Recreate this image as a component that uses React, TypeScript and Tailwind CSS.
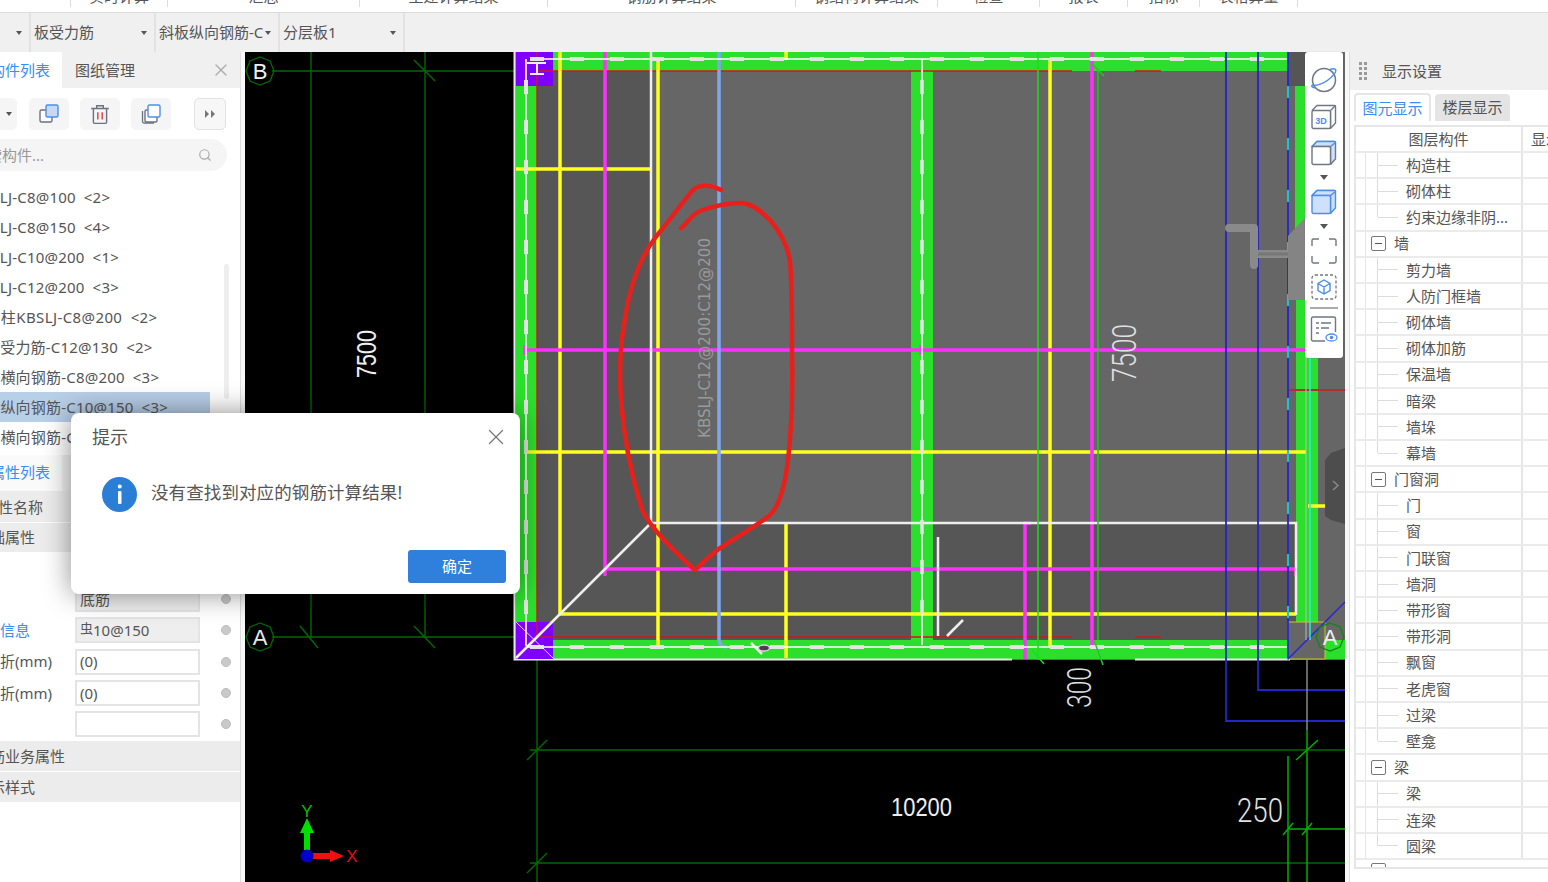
import React from 'react';
import { X, Search } from 'lucide-react';

const ribbon = [
  { label: '实时计算', w: 'w-[98px]' },
  { label: '汇总', w: 'w-[192px]' },
  { label: '土建计算结果', w: 'w-[188px]' },
  { label: '钢筋计算结果', w: 'w-[248px]' },
  { label: '钢结构计算结果', w: 'w-[142px]' },
  { label: '检查', w: 'w-[102px]' },
  { label: '报表', w: 'w-[88px]' },
  { label: '指标', w: 'w-[72px]' },
  { label: '表格算量', w: 'w-[98px]' },
];

const parts = [
  { text: 'KBSLJ-C8@100 <2>', cls: 'ml-[2px]' },
  { text: 'KBSLJ-C8@150 <4>', cls: 'ml-[2px]' },
  { text: 'KBSLJ-C10@200 <1>', cls: 'ml-[2px]' },
  { text: 'KBSLJ-C12@200 <3>', cls: 'ml-[2px]' },
  { text: '柱帽柱KBSLJ-C8@200 <2>', cls: 'tracking-[0.4px]' },
  { text: '板受力筋-C12@130 <2>', cls: 'ml-[15px]' },
  { text: '斜板横向钢筋-C8@200 <3>', cls: '' },
  { text: '斜板纵向钢筋-C10@150 <3>', cls: '' },
  { text: '斜板横向钢筋-C10@150 <3>', cls: '' },
];

const layers: { name: string; kind: 'child' | 'last' | 'group' }[] = [
  { name: '构造柱', kind: 'child' },
  { name: '砌体柱', kind: 'child' },
  { name: '约束边缘非阴...', kind: 'last' },
  { name: '墙', kind: 'group' },
  { name: '剪力墙', kind: 'child' },
  { name: '人防门框墙', kind: 'child' },
  { name: '砌体墙', kind: 'child' },
  { name: '砌体加筋', kind: 'child' },
  { name: '保温墙', kind: 'child' },
  { name: '暗梁', kind: 'child' },
  { name: '墙垛', kind: 'child' },
  { name: '幕墙', kind: 'last' },
  { name: '门窗洞', kind: 'group' },
  { name: '门', kind: 'child' },
  { name: '窗', kind: 'child' },
  { name: '门联窗', kind: 'child' },
  { name: '墙洞', kind: 'child' },
  { name: '带形窗', kind: 'child' },
  { name: '带形洞', kind: 'child' },
  { name: '飘窗', kind: 'child' },
  { name: '老虎窗', kind: 'child' },
  { name: '过梁', kind: 'child' },
  { name: '壁龛', kind: 'last' },
  { name: '梁', kind: 'group' },
  { name: '梁', kind: 'child' },
  { name: '连梁', kind: 'child' },
  { name: '圆梁', kind: 'last' },
];

const Caret = ({ className = '' }: { className?: string }) => (
  <span className={`w-0 h-0 border-l-[3.5px] border-r-[3.5px] border-t-[4px] border-l-transparent border-r-transparent border-t-[#555] ${className}`} />
);

const Dropdown = ({ label, w }: { label: string; w: string }) => (
  <div className={`${w} h-full flex items-center justify-between pl-[3px] pr-[7px] border-r-2 border-[#e2e2e2] overflow-hidden`}>
    <span className="whitespace-nowrap overflow-hidden">{label}</span>
    <Caret className="shrink-0 ml-[2px]" />
  </div>
);

const CopyIcon = ({ stack = false }: { stack?: boolean }) => (
  <svg width="22" height="22" viewBox="0 0 22 22" fill="none">
    {stack && <path d="M2.5 8v10.5a1.5 1.5 0 0 0 1.5 1.5h10" stroke="#6b7280" strokeWidth="1.3" />}
    <rect x={stack ? 5 : 2} y="7" width="12" height="12" rx="1.5" stroke="#6b7280" strokeWidth="1.4" fill="#fff" />
    <rect x="8" y="2" width="12" height="12" rx="1.5" stroke="#4c8fe8" strokeWidth="1.4" fill={stack ? '#fff' : '#c5d9f5'} />
  </svg>
);

const TrashIcon = () => (
  <svg width="22" height="22" viewBox="0 0 20 20" fill="none">
    <path d="M2 5h16M7 5V2.5h6V5M4 5v12.5A1 1 0 0 0 5 18.500h10a1 1 0 0 0 1-1V5" stroke="#6b7280" strokeWidth="1.3" />
    <path d="M8 8.500v6.500M12 8.500v6.500" stroke="#e5484d" strokeWidth="1.4" />
  </svg>
);

const Cube = ({ top = false, filled = false, label = false }: { top?: boolean; filled?: boolean; label?: boolean }) => {
  const blue = '#4c8fe8';
  const gray = '#6f7684';
  return (
    <svg width="26" height="26" viewBox="0 0 26 26" fill="none">
      <path d="M1 6.500L6 1.500h18.500V19.500L19.500 24.500" fill={filled ? '#c9defa' : top ? '#cfe0f8' : '#fff'} />
      <path d="M19.500 7V24.500" stroke={filled ? blue : gray} strokeWidth="1.4" />
      <path d="M1 6.500L6 1.500H23.500a1 1 0 0 1 1 1V19L19.500 24.500" stroke={filled ? blue : gray} strokeWidth="1.4" />
      {(top || filled) && <path d="M1 6.500L6 1.500H23.500a1 1 0 0 1 1 1L19.500 6.500H1z" stroke={blue} strokeWidth="1.4" fill="#cfe0f8" />}
      <rect x="1" y="6.500" width="18.500" height="18" rx="1.500" stroke={filled ? blue : gray} strokeWidth="1.4" fill={filled ? '#cfe0fa' : '#fff'} />
      {!top && !filled && <path d="M19.500 6.500L24.500 1.500" stroke={gray} strokeWidth="1.4" />}
      {label && <text x="10" y="20" textAnchor="middle" fontSize="9" fontWeight="700" fill={blue} fontFamily="Liberation Sans, sans-serif">3D</text>}
    </svg>
  );
};

const SideTools = () => (
  <div className="absolute right-[2px] top-0 w-[38px] h-[306px] bg-white rounded-b-[3px] rounded-t-[3px] flex flex-col items-center pt-[14px] shadow-[0_0_1px_rgba(0,0,0,0.3)]">
    <svg width="28" height="28" viewBox="0 0 28 28" fill="none">
      <circle cx="14" cy="14" r="11.500" stroke="#6f7684" strokeWidth="1.5" />
      <path d="M2 19C6 20 13 18 18 14C23 10 27 6 25.500 3.500C24 2 21 3 19 4" stroke="#4c8fe8" strokeWidth="1.5" />
      <path d="M2 19C1 21 3 22 6 21.500" stroke="#4c8fe8" strokeWidth="1.5" />
    </svg>
    <div className="mt-[10px]"><Cube label /></div>
    <div className="mt-[10px]"><Cube top /></div>
    <span className="mt-[9px] w-0 h-0 border-l-[4px] border-r-[4px] border-t-[5px] border-l-transparent border-r-transparent border-t-[#555]" />
    <div className="mt-[9px]"><Cube filled /></div>
    <span className="mt-[9px] w-0 h-0 border-l-[4px] border-r-[4px] border-t-[5px] border-l-transparent border-r-transparent border-t-[#555]" />
    <svg className="mt-[9px]" width="26" height="26" viewBox="0 0 26 26" fill="none" stroke="#6f7684" strokeWidth="1.4">
      <path d="M1 8V2.500A1.500 1.500 0 0 1 2.500 1H8M18 1h5.500A1.500 1.500 0 0 1 25 2.500V8M25 18v5.500a1.500 1.500 0 0 1-1.500 1.500H18M8 25H2.500A1.500 1.500 0 0 1 1 23.500V18" />
    </svg>
    <svg className="mt-[10px]" width="26" height="26" viewBox="0 0 26 26" fill="none">
      <rect x="1" y="1" width="24" height="24" rx="3" stroke="#6f7684" strokeWidth="1.3" strokeDasharray="3 2" />
      <path d="M13 6L19 9.500V16.500L13 20L7 16.500V9.500L13 6ZM7 9.500L13 13L19 9.500M13 13V20" stroke="#4c8fe8" strokeWidth="1.4" />
    </svg>
    <div className="mt-[7px] w-[28px] h-[2px] bg-[#aaa]" />
    <svg className="mt-[7px]" width="28" height="28" viewBox="0 0 28 28" fill="none">
      <path d="M15 25H3a1.500 1.500 0 0 1-1.500-1.500V2.500A1.500 1.500 0 0 1 3 1h21a1.500 1.500 0 0 1 1.500 1.500V16" stroke="#6f7684" strokeWidth="1.4" />
      <path d="M6 7h3M11 7h10M6 12h3M11 12h8M6 17h3" stroke="#6f7684" strokeWidth="1.4" />
      <ellipse cx="21.500" cy="21.500" rx="5.500" ry="3.500" stroke="#4c8fe8" strokeWidth="1.3" fill="#fff" />
      <circle cx="21.500" cy="21.500" r="1.800" fill="#4c8fe8" />
    </svg>
  </div>
);

const Drawing = () => (
  <svg className="block w-full h-full" viewBox="245 52 1100 830" fill="none">
    <rect x="245" y="52" width="1100" height="830" fill="#000" />
    {/* axis lines outside the slab */}
    <g stroke="#006a00" strokeWidth="1.400">
      <path d="M272 71H516M272 637H516M311 52V637M425 52V637M414 60L435 81M300 626L318 648M414 626L435 648" />
      <path d="M537 658V882M530 750H1345M530 863H1345M527 760L547 740M527 873L547 853" />
    </g>
    <polygon points="260,57 270,61 274,71 270,81 260,85 250,81 246,71 250,61" stroke="#006a00" strokeWidth="1.300" />
    <polygon points="260,623 270,627 274,637 270,647 260,651 250,647 246,637 250,627" stroke="#006a00" strokeWidth="1.300" />
    <text x="260" y="79" textAnchor="middle" fontSize="22" fill="#f2f2f2" fontFamily="Liberation Sans, sans-serif">B</text>
    <text x="260" y="645" textAnchor="middle" fontSize="22" fill="#e8e8e8" fontFamily="Liberation Sans, sans-serif">A</text>

    {/* slab */}
    <rect x="515" y="52" width="830" height="608" fill="#666" />
    <polygon points="537,71 651,71 651,523 1296,523 1296,640 537,640" fill="#565656" />
    <path d="M516 52H1288V71H537V640H1345V659H516Z" fill="#2ddf2d" />
    <rect x="911" y="71" width="22" height="569" fill="#2ddf2d" />
    <rect x="1295" y="71" width="12" height="160" fill="#2ddf2d" />
    <rect x="1296" y="300" width="22" height="340" fill="#2ddf2d" />
    <rect x="1288" y="52" width="18" height="34" fill="#555" />
    <rect x="1288" y="622" width="37" height="37" fill="#666" stroke="#c8c820" strokeWidth="1" />
    <path d="M514.500 52V659.500H1012M1135 659.500H1290" stroke="#e8e8e8" strokeWidth="2" />
    <rect x="516" y="52" width="37" height="34" fill="#8000ff" />
    <rect x="516" y="622" width="37" height="37" fill="#8000ff" />

    {/* thin reference lines */}
    <path d="M537 71H1072M1135 71H1161M537 52V640M537 637H1072M1135 637H1161" stroke="#cc1a1a" strokeWidth="1.400" />
    <path d="M1289 390H1345" stroke="#b03030" strokeWidth="2" />

    {/* rebar: yellow */}
    <g stroke="#ffff20" strokeWidth="3.500">
      <path d="M560 52V614M516 169H650M658 60V647M525 452H1306M560 614H1296M786 523V658M786 52V60M1050 60V647M1308 506H1325" />
    </g>
    {/* rebar: magenta */}
    <g stroke="#ff30ff" strokeWidth="3.500">
      <path d="M605 52V576M525 350H1305M605 569H1296M1296 569V576M525 345V355M921 345V355M1092 52V645L1098 649M1031 523H1025V659" />
    </g>
    <path d="M719 52V640Q719 647 727 647" stroke="#80a6f0" strokeWidth="3.500" />

    {/* white outline */}
    <g stroke="#eee" strokeWidth="2.500">
      <path d="M651 52V523H1296V615M651 523L516 658M938 537V636M947 636L963 620M751 643L762 654" />
    </g>
    <g stroke="#fff" strokeWidth="1.600">
      <path d="M537 59H1288M526 59V646M526 647H1288M922 59V645" />
    </g>
    <g stroke="#e4e4e4" strokeWidth="4" strokeDasharray="14 26">
      <path d="M530 59H1288M526 80V640M530 647H1288" />
      <path d="M922 80V640" strokeWidth="3.500" />
    </g>
    <ellipse cx="764" cy="648" rx="5.500" ry="3" fill="#444" stroke="#f0c8f0" strokeWidth="1.300" />
    <path d="M516 622L553 658M553 622L516 658" stroke="#fff" strokeWidth="1" opacity="0.800" />
    <path d="M527 63H546M537 63V74M530 74H544" stroke="#eee" strokeWidth="2" />

    {/* green dim lines over the slab */}
    <path d="M1038 52V660M1032 650L1044 664" stroke="#18e018" strokeWidth="1.500" />
    <path d="M1098 71V640M1094 640L1103 665M1092 64L1104 76" stroke="#20c820" strokeWidth="1.500" />

    {/* blue lines */}
    <path d="M1226 52V721H1345M1258 52V690H1345" stroke="#2424c8" strokeWidth="1.800" />
    <path d="M1288 52V659" stroke="#2424d8" strokeWidth="1.800" />
    <path d="M1288 86V660" stroke="#10d8d8" strokeWidth="1.800" strokeDasharray="12 40" />
    <path d="M1288 659L1345 602" stroke="#2424d8" strokeWidth="1.500" />
    <path d="M1310 300V640" stroke="#20f0e0" strokeWidth="1.500" />
    <path d="M1306 300V640" stroke="#bbb" strokeWidth="1" />

    {/* bent gray member */}
    <path d="M1229 228H1254V265M1254 254H1288" stroke="#8a8a8a" strokeWidth="8" strokeLinecap="round" strokeLinejoin="round" />
    <path d="M1258 254H1288" stroke="#777" strokeWidth="3" />
    <polygon points="1288,236 1305,218 1305,300 1288,300" fill="#848484" />

    {/* collapse handle */}
    <polygon points="1345,448 1331,453 1325,460 1325,516 1331,520 1345,524" fill="#4d4d4d" />
    <path d="M1333 481L1338 485.500L1333 490" stroke="#8a8a8a" strokeWidth="1.500" />

    <polygon points="1330,623 1340,627 1344,637 1340,647 1330,651 1320,647 1316,637 1320,627" stroke="#0a8a0a" strokeWidth="1.300" />
    <text x="1330" y="645" textAnchor="middle" fontSize="22" fill="#eee" fontFamily="Liberation Sans, sans-serif">A</text>

    {/* bottom dim lines */}
    <path d="M1307 660V730" stroke="#888" strokeWidth="1.500" />
    <path d="M1307 730V882M1288 756V882M1288 829H1345M1296 760L1318 740M1283 835L1293 823M1302 835L1312 823" stroke="#00b000" strokeWidth="1.500" />

    {/* dimensions */}
    <text transform="translate(376 378) rotate(-90)" fontSize="27" textLength="48" lengthAdjust="spacingAndGlyphs" fill="#eee" fontFamily="Liberation Sans, sans-serif">7500</text>
    <text transform="translate(1136 382) rotate(-90)" fontSize="33" textLength="58" lengthAdjust="spacingAndGlyphs" fill="#e0e0e0" fontFamily="Roboto, sans-serif" fontWeight="300">7500</text>
    <text transform="translate(1091 708) rotate(-90)" fontSize="33" textLength="41" lengthAdjust="spacingAndGlyphs" fill="#e0e0e0" fontFamily="Roboto, sans-serif" fontWeight="300">300</text>
    <text x="891" y="816" fontSize="25" textLength="61" lengthAdjust="spacingAndGlyphs" fill="#eee" fontFamily="Liberation Sans, sans-serif">10200</text>
    <text x="1237" y="822" fontSize="33" textLength="46" lengthAdjust="spacingAndGlyphs" fill="#e0e0e0" fontFamily="Roboto, sans-serif" fontWeight="300">250</text>
    <text transform="translate(710 438) rotate(-90)" fontSize="15" textLength="200" lengthAdjust="spacingAndGlyphs" fill="#9a9a9a" fontFamily="DejaVu Sans, sans-serif">KBSLJ-C12@200:C12@200</text>

    {/* hand-drawn circle */}
    <path
      d="M721 190C712 185 700 184 693 190C682 203 668 222 655 238C640 258 630 285 625 318C620 345 619 372 621 400C624 440 632 478 642 510C652 530 678 555 695 570C702 564 712 552 725 545C740 535 758 525 770 515C780 505 785 485 788 460C792 425 793 395 792 350C792 310 792 285 790 262C788 245 780 232 770 220C760 210 752 204 742 203C725 203 708 208 700 211C692 214 687 223 681 228"
      stroke="#e8201c"
      strokeWidth="4.500"
      strokeLinecap="round"
      strokeLinejoin="round"
    />

    {/* XY marker */}
    <path d="M307 850V832" stroke="#00e000" strokeWidth="6" />
    <polygon points="307,818 314,833 300,833" fill="#00e000" />
    <path d="M313 856H331" stroke="#f01010" strokeWidth="6" />
    <polygon points="344,856 330,850 330,862" fill="#f01010" />
    <circle cx="307" cy="856" r="6.500" fill="#0000c8" />
    <text x="307" y="817" textAnchor="middle" fontSize="17" fill="#00c000" fontFamily="Liberation Sans, sans-serif">Y</text>
    <text x="352" y="862" textAnchor="middle" fontSize="17" fill="#e01010" fontFamily="Liberation Sans, sans-serif">X</text>
  </svg>
);

const PropRow = ({ label, value, gray = false }: { label?: React.ReactNode; value?: React.ReactNode; gray?: boolean }) => (
  <div className="h-[31.3px] flex items-center pl-[30px]">
    <div className="w-[105px] whitespace-nowrap overflow-visible">{label}</div>
    <div className={`w-[125px] h-[26px] border-2 border-[#e4e4e4] flex items-center px-[3px] ${gray ? 'bg-[#eeeeee]' : 'bg-white'}`}>{value}</div>
    <div className="ml-[21px] w-[10px] h-[10px] rounded-full bg-[#c9c9c9] border border-[#bbb]" />
  </div>
);

const LayerRow = ({ name, kind }: { name: string; kind: 'child' | 'last' | 'group' }) => (
  <div className="h-[26.2px] flex border-b-2 border-[#ebebeb] box-border">
    <div className="w-[167px] flex shrink-0 border-r-2 border-[#e6e6e6]">
      <div className="w-[10px] border-r border-[#e6e6e6]" />
      {kind === 'group' ? (
        <div className="flex items-center">
          <div className="ml-[5px] w-[15px] h-[15px] rounded-[2px] border border-[#777] bg-white flex items-center justify-center">
            <div className="w-[7px] h-px bg-[#555]" />
          </div>
          <span className="ml-[8px]">{name}</span>
        </div>
      ) : (
        <>
          <div className="w-[12px]">
            <div className={`border-r border-[#ddd] ${kind === 'last' ? 'h-1/2' : 'h-full'}`} />
          </div>
          <div className="flex items-center">
            <div className="w-[20px] h-px bg-[#ddd]" />
            <span className="ml-[8px] whitespace-nowrap">{name}</span>
          </div>
        </>
      )}
    </div>
  </div>
);

export default function App() {
  return (
    <div className="relative w-[1548px] h-[882px] overflow-hidden bg-[#f0f0f0] text-[15px] text-[#555] font-['Noto_Sans','Noto_Sans_CJK_SC',sans-serif]">
      {/* ribbon tabs, only their bottom edge is in view */}
      <div className="h-[13px] bg-white border-b border-[#dcdcdc] flex items-start pl-[70px] overflow-hidden">
        {ribbon.map((r) => (
          <div key={r.label} className={`${r.w} h-[7px] border-r border-l-0 border-[#ddd] first:border-l flex justify-center overflow-hidden shrink-0`}>
            <span className="-mt-[14px] leading-[20px] whitespace-nowrap">{r.label}</span>
          </div>
        ))}
      </div>

      {/* dropdown bar */}
      <div className="h-[39px] flex items-center">
        <Dropdown label="" w="w-[31px]" />
        <Dropdown label="板受力筋" w="w-[125px]" />
        <Dropdown label="斜板纵向钢筋-C" w="w-[124px]" />
        <Dropdown label="分层板1" w="w-[125px]" />
      </div>

      <div className="flex h-[830px]">
        {/* left panel, its left edge runs off the picture */}
        <div className="w-[240px] shrink-0 bg-white overflow-hidden relative">
          <div className="-ml-[60px] w-[300px]">
            <div className="h-[36px] bg-[#f0f0f0] flex items-center">
              <div className="w-[122px] h-full bg-white pl-[50px] flex items-center text-[#3c8cf0] whitespace-nowrap">构件列表</div>
              <span className="ml-[13px]">图纸管理</span>
              <X className="ml-[76px] text-[#aaa]" size={20} strokeWidth={1.5} />
            </div>
            <div className="h-[51px] flex items-center">
              <div className="ml-[40px] w-[37px] h-[32px] bg-[#f5f5f5] rounded-[5px] flex items-center justify-end pr-[5px]"><Caret /></div>
              <div className="ml-[12px] w-[40px] h-[32px] bg-[#f5f5f5] rounded-[5px] flex items-center justify-center"><CopyIcon /></div>
              <div className="ml-[11px] w-[40px] h-[32px] bg-[#f5f5f5] rounded-[5px] flex items-center justify-center"><TrashIcon /></div>
              <div className="ml-[11px] w-[40px] h-[32px] bg-[#f5f5f5] rounded-[5px] flex items-center justify-center"><CopyIcon stack /></div>
              <div className="ml-[23px] w-[32px] h-[32px] bg-[#f7f7f7] border border-[#e2e2e2] rounded-[5px] flex items-center justify-center">
                <svg width="10" height="8" viewBox="0 0 10 8" fill="#777">
                  <path d="M0 0L4 4L0 8ZM6 0L10 4L6 8Z" />
                </svg>
              </div>
            </div>
            <div className="ml-[30px] w-[257px] h-[32px] bg-[#f5f5f5] rounded-full flex items-center pl-[2px] pr-[15px] justify-between text-[#999]">
              <span>搜索构件...</span>
              <Search size={14} className="text-[#aaa]" />
            </div>
            <div className="mt-[11px] relative">
              {parts.map((p, i) => (
                <div key={p.text} className={`h-[30px] pl-[30px] flex items-center whitespace-nowrap tracking-[0.2px] [word-spacing:4px] ${i === 7 ? 'bg-[#b8cfe8] w-[270px]' : ''}`}>
                  <span className={p.cls}>{p.text}</span>
                </div>
              ))}
              <div className="absolute left-[284px] top-[82px] w-[5px] h-[135px] bg-[#eeeeee] rounded-full" />
            </div>
            <div className="mt-[3px] h-[36px] bg-[#f0f0f0] flex">
              <div className="w-[122px] h-full bg-[#fafafa] pl-[50px] pb-[2px] flex items-center text-[#3c8cf0] whitespace-nowrap">属性列表</div>
            </div>
            <div className="h-[31px] bg-[#ececec] pl-[43px] pt-[1px] flex items-center">属性名称</div>
            <div className="h-[30px] bg-[#ececec] border-t border-white pl-[35px] flex items-center">基础属性</div>
            <PropRow />
            <PropRow label="" value="底筋" gray />
            <PropRow label={<span className="text-[#3c8cf0]">钢筋信息</span>} value={<span><span className="text-[13px] align-top">虫</span>10@150</span>} gray />
            <PropRow label="左弯折(mm)" value="(0)" />
            <PropRow label="右弯折(mm)" value="(0)" />
            <PropRow />
            <div className="h-[30px] mt-[1px] bg-[#ececec] pl-[35px] flex items-center">钢筋业务属性</div>
            <div className="h-[30px] mt-[1px] bg-[#ececec] pl-[35px] flex items-center">显示样式</div>
          </div>
        </div>

        <div className="w-[5px] shrink-0 bg-[#f8f8f8] border-l border-[#ddd]" />

        {/* drawing area */}
        <div className="w-[1100px] shrink-0 relative">
          <Drawing />
          <SideTools />
        </div>

        <div className="w-[5px] shrink-0 bg-[#f8f8f8] border-r border-[#ddd]" />

        {/* display settings */}
        <div className="flex-1 bg-white overflow-hidden">
          <div className="h-[38px] bg-[#f0f0f0] flex items-center pl-[9px]">
            <svg width="8" height="18" viewBox="0 0 8 18" fill="#999">
              <rect x="0" y="0" width="3" height="3" /><rect x="5" y="0" width="3" height="3" />
              <rect x="0" y="5" width="3" height="3" /><rect x="5" y="5" width="3" height="3" />
              <rect x="0" y="10" width="3" height="3" /><rect x="5" y="10" width="3" height="3" />
              <rect x="0" y="15" width="3" height="3" /><rect x="5" y="15" width="3" height="3" />
            </svg>
            <span className="ml-[15px]">显示设置</span>
          </div>
          <div className="h-[31px] pl-[4px] flex items-end">
            <div className="w-[77px] h-[28px] bg-white border-2 border-b-0 border-[#e6e6e6] rounded-t-[4px] text-[#3c8cf0] flex items-center justify-center">图元显示</div>
            <div className="ml-[4px] w-[75px] h-[27px] bg-[#e4e4e4] rounded-t-[4px] flex items-center justify-center">楼层显示</div>
          </div>
          <div className="ml-[4px] mt-[4px] h-[744px] w-[300px] border-l-2 border-b-2 border-t-2 border-[#e6e6e6] overflow-hidden">
            <div className="h-[24px] flex border-b-2 border-[#ebebeb] box-content">
              <div className="w-[167px] shrink-0 border-r-2 border-[#e6e6e6] flex items-center justify-center">图层构件</div>
              <div className="pl-[8px] flex items-center">显示</div>
            </div>
            {layers.map((l, i) => (
              <LayerRow key={i} name={l.name} kind={l.kind} />
            ))}
            <div className="pl-[15px] pt-[3px]">
              <div className="w-[15px] h-[15px] rounded-[2px] border border-[#777]" />
            </div>
          </div>
        </div>
      </div>

      {/* message dialog */}
      <div className="absolute left-[71px] top-[413px] w-[449px] h-[181px] bg-white rounded-[8px] shadow-[0_0_28px_rgba(0,0,0,0.45)] flex flex-col">
        <div className="h-[48px] flex items-center justify-between pl-[21px] pr-[11px] text-[18px]">
          <span>提示</span>
          <X size={26} className="text-[#777]" strokeWidth={1.2} />
        </div>
        <div className="flex items-center pl-[31px] mt-[16px]">
          <svg width="35" height="35" viewBox="0 0 35 35">
            <circle cx="17.500" cy="17.500" r="17.500" fill="#2b7ed6" />
            <rect x="16" y="14" width="3.500" height="13" rx="1" fill="#fff" />
            <circle cx="17.750" cy="9.500" r="2" fill="#fff" />
          </svg>
          <span className="ml-[14px] text-[17.500px] -mt-[4px] tracking-[0.1px]">没有查找到对应的钢筋计算结果!</span>
        </div>
        <div className="mt-auto mb-[11px] mr-[14px] self-end w-[98px] h-[33px] rounded-[3px] bg-[#2f80dd] text-white flex items-center justify-center">确定</div>
      </div>
    </div>
  );
}
